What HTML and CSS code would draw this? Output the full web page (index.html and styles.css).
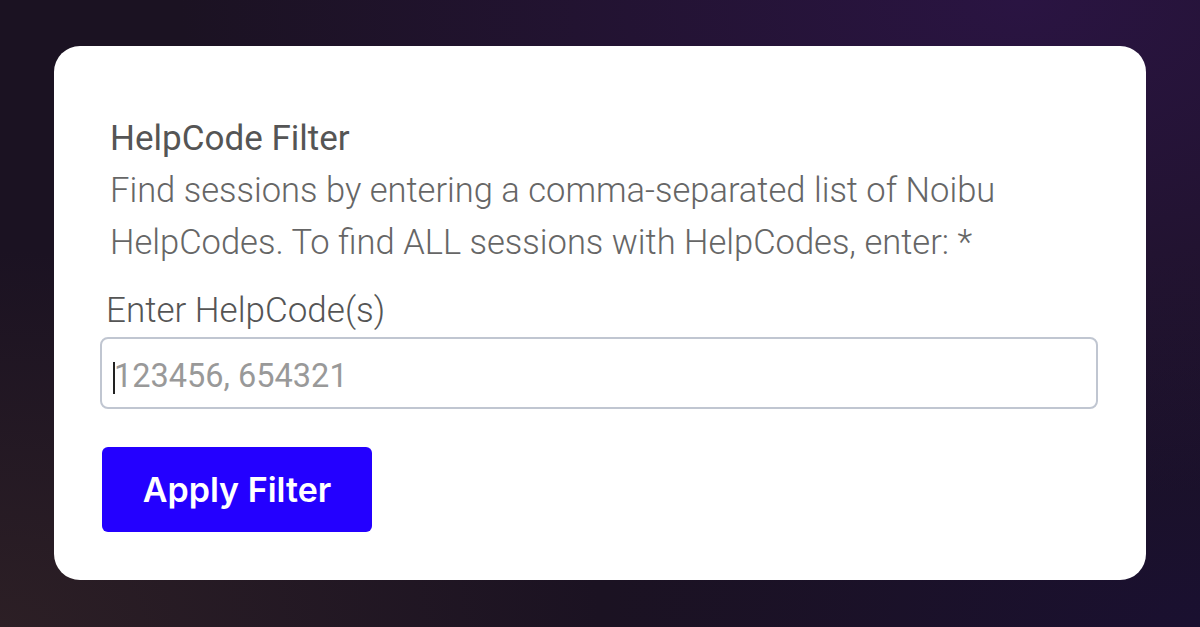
FILE: index.html
```html
<!DOCTYPE html>
<html lang="en">
<head>
  <meta charset="UTF-8">
  <meta name="viewport" content="width=device-width, initial-scale=1.0">
  <title>HelpCode Filter</title>
  <link rel="stylesheet" href="styles.css">
</head>
<body>
  <!-- Filter Card -->
  <div class="card">
    <h1 class="card-title">HelpCode Filter</h1>
    <p class="card-desc">Find sessions by entering a comma-separated list of Noibu HelpCodes. To find ALL sessions with HelpCodes, enter: *</p>

    <label class="field-label" for="helpcodes">Enter HelpCode(s)</label>
    <div class="field">
      <span class="caret"></span>
      <input id="helpcodes" type="text" placeholder="123456, 654321">
    </div>

    <button class="apply-btn">Apply Filter</button>
  </div>
</body>
</html>
```

FILE: styles.css
```css
/* General Reset */
* {
  margin: 0;
  padding: 0;
  box-sizing: border-box;
}

html, body {
  height: 100%;
}

body {
  font-family: 'Roboto', 'Liberation Sans', sans-serif;
  background-color: #1b1222;
  background-image:
    radial-gradient(ellipse 70% 80% at 85% 0%, #2a1442 0%, rgba(42, 20, 66, 0) 100%),
    radial-gradient(ellipse 50% 60% at 0% 100%, #2c1f25 0%, rgba(44, 31, 37, 0) 100%),
    radial-gradient(ellipse 50% 60% at 100% 100%, #1a1030 0%, rgba(26, 16, 48, 0) 100%);
  padding: 46px 54px 47px;
  overflow: hidden;
}

/* Card */
.card {
  height: 534px;
  background-color: #ffffff;
  border-radius: 26px;
  padding: 68px 48px 0 46px;
  display: flex;
  flex-direction: column;
  align-items: flex-start;
}

.card-title {
  font-size: 35px;
  font-weight: 400;
  color: #555555;
  line-height: 50px;
  padding-left: 10px;
}

.card-desc {
  font-size: 34.5px;
  font-weight: 300;
  color: #666666;
  line-height: 52px;
  padding-left: 10px;
  max-width: 920px;
}

.field-label {
  font-size: 35px;
  font-weight: 300;
  color: #555555;
  line-height: 50px;
  margin-top: 18px;
  padding-left: 6px;
}

/* Input */
.field {
  position: relative;
  width: 100%;
  margin-top: 1px;
}

.field input {
  width: 100%;
  height: 72px;
  border: 2px solid #c0c6d1;
  border-radius: 8px;
  padding: 6px 12px 0;
  font-family: 'Roboto', sans-serif;
  font-size: 32.5px;
  color: #333;
  outline: none;
}

.field input::placeholder {
  color: #999999;
}

.caret {
  position: absolute;
  left: 13px;
  top: 25px;
  width: 2px;
  height: 32px;
  background-color: #222;
}

/* Button */
.apply-btn {
  margin-top: 38px;
  margin-left: 2px;
  width: 270px;
  height: 85px;
  background-color: #2400ff;
  color: #ffffff;
  border: none;
  border-radius: 6px;
  font-family: 'Inter', sans-serif;
  font-size: 34px;
  font-weight: 600;
  cursor: pointer;
}
```
